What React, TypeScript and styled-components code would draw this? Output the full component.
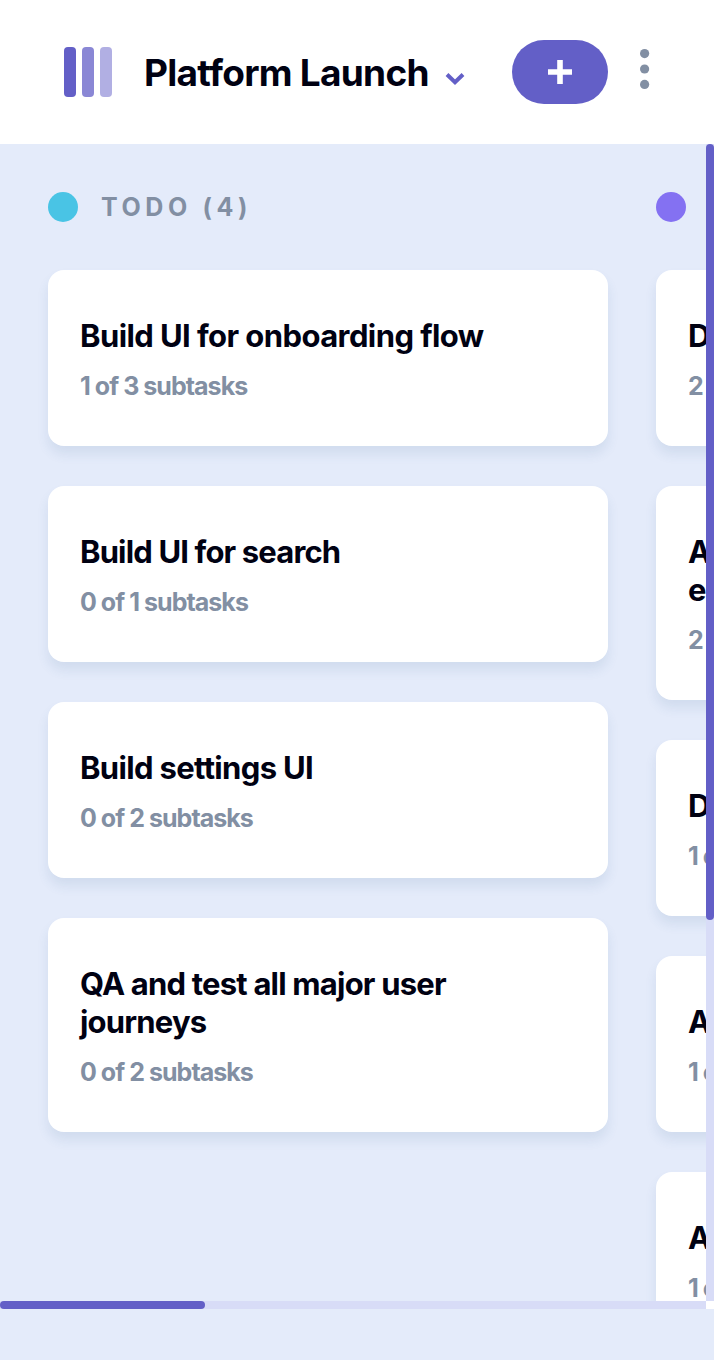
import React from "react";
import styled, { createGlobalStyle } from "styled-components";

const GlobalStyle = createGlobalStyle`
  *, *::before, *::after { box-sizing: border-box; }
  body {
    margin: 0;
    background: #e4ebfa;
    font-family: Inter, "Liberation Sans", sans-serif;
    font-weight: 700;
    overflow: hidden;
  }
  h1, h2, h3, p { margin: 0; }
`;

const Page = styled.div`
  display: flex;
  flex-direction: column;
  height: 1360px;
  background: #e4ebfa;
`;

const Header = styled.header`
  display: flex;
  align-items: center;
  flex: none;
  height: 144px;
  padding: 0 64px;
  background: #fff;
`;

const Logo = styled.div`
  display: flex;
  gap: 6px;
  margin-right: 32px;
`;

const LogoBar = styled.span<{ $opacity: number }>`
  width: 12px;
  height: 50px;
  border-radius: 4px;
  background: #635fc7;
  opacity: ${(p) => p.$opacity};
`;

const BoardSwitch = styled.div`
  display: flex;
  align-items: center;
  flex: 1;
  gap: 16px;
`;

const BoardName = styled.h1`
  width: 285px;
  padding-top: 1px;
  font-size: 37px;
  font-weight: 700;
  line-height: 46px;
  letter-spacing: -0.72px;
  color: #000112;
  white-space: nowrap;
`;

const Chevron = styled.svg`
  display: block;
  margin-top: 14px;
`;

const AddButton = styled.button`
  display: flex;
  align-items: center;
  justify-content: center;
  width: 96px;
  height: 64px;
  padding: 0;
  border: 0;
  border-radius: 32px;
  background: #635fc7;
`;

const MenuButton = styled.button`
  display: flex;
  margin: 0 0 6px 32px;
  padding: 0;
  border: 0;
  background: none;
`;

const Viewport = styled.main`
  display: grid;
  grid-template-columns: 706px 8px;
  grid-template-rows: 1157px 8px;
  flex: none;
`;

const Board = styled.div`
  display: flex;
  gap: 48px;
  padding: 48px 0 0 48px;
  overflow: hidden;
`;

const Column = styled.section`
  display: flex;
  flex-direction: column;
  flex: none;
  width: 560px;
`;

const ColumnHeader = styled.div`
  display: flex;
  align-items: center;
  gap: 23px;
  height: 30px;
  margin-bottom: 48px;
`;

const Dot = styled.span<{ $color: string }>`
  width: 30px;
  height: 30px;
  border-radius: 50%;
  background: ${(p) => p.$color};
`;

const ColumnName = styled.h2`
  font-size: 25px;
  font-weight: 700;
  line-height: 30px;
  letter-spacing: 4.6px;
  color: #828fa3;
`;

const CardList = styled.div`
  display: flex;
  flex-direction: column;
  gap: 40px;
`;

const Card = styled.article`
  flex: none;
  padding: 47px 32px 45px;
  border-radius: 16px;
  background: #fff;
  box-shadow: 0 8px 12px rgba(54, 98, 150, 0.11);
`;

const CardTitle = styled.h3<{ $tracking: number }>`
  font-size: 31px;
  font-weight: 700;
  line-height: 38px;
  letter-spacing: ${(p) => p.$tracking}px;
  color: #000112;
`;

const CardMeta = styled.p`
  margin-top: 16px;
  font-size: 25px;
  font-weight: 700;
  line-height: 30px;
  letter-spacing: -0.96px;
  color: #828fa3;
`;

const Track = styled.div`
  background: #d8dcf7;
`;

const Thumb = styled.div<{ $width: number; $height: number }>`
  width: ${(p) => p.$width}px;
  height: ${(p) => p.$height}px;
  border-radius: 4px;
  background: #635fc7;
`;

const Corner = styled.div`
  background: #fff;
`;

interface Task {
  title: string;
  done: number;
  total: number;
  tracking?: number;
}

interface ColumnData {
  name: string;
  color: string;
  tasks: Task[];
}

const columns: ColumnData[] = [
  {
    name: "TODO",
    color: "#49c4e5",
    tasks: [
      { title: "Build UI for onboarding flow", done: 1, total: 3, tracking: -0.58 },
      { title: "Build UI for search", done: 0, total: 1, tracking: -0.85 },
      { title: "Build settings UI", done: 0, total: 2, tracking: -0.66 },
      { title: "QA and test all major user journeys", done: 0, total: 2 },
    ],
  },
  {
    name: "DOING",
    color: "#8471f2",
    tasks: [
      { title: "Design settings page", done: 2, total: 3 },
      { title: "Add account management endpoints", done: 2, total: 3 },
      { title: "Design onboarding flow", done: 1, total: 3 },
      { title: "Add search endpoints", done: 1, total: 2 },
      { title: "Add auth endpoints", done: 1, total: 3 },
    ],
  },
];

export default function App() {
  return (
    <>
      <GlobalStyle />
      <Page>
        <Header>
          <Logo>
            <LogoBar $opacity={1} />
            <LogoBar $opacity={0.75} />
            <LogoBar $opacity={0.5} />
          </Logo>
          <BoardSwitch>
            <BoardName>Platform Launch</BoardName>
            <Chevron width="20" height="14" viewBox="0 0 20 14" fill="none">
              <path d="M2 2.5 10 10.2 18 2.5" stroke="#635fc7" strokeWidth="4" />
            </Chevron>
          </BoardSwitch>
          <AddButton aria-label="Add task">
            <svg width="24" height="24" viewBox="0 0 24 24">
              <path d="M9.2 0h5.6v9.3H24v5.4h-9.2V24H9.2v-9.3H0V9.3h9.2z" fill="#fff" />
            </svg>
          </AddButton>
          <MenuButton aria-label="Board menu">
            <svg width="10" height="40" viewBox="0 0 10 40" fill="#828fa3">
              <circle cx="4.6" cy="4.6" r="4.6" />
              <circle cx="4.6" cy="20" r="4.6" />
              <circle cx="4.6" cy="35.4" r="4.6" />
            </svg>
          </MenuButton>
        </Header>
        <Viewport>
          <Board>
            {columns.map((column) => (
              <Column key={column.name}>
                <ColumnHeader>
                  <Dot $color={column.color} />
                  <ColumnName>
                    {column.name} ({column.tasks.length})
                  </ColumnName>
                </ColumnHeader>
                <CardList>
                  {column.tasks.map((task) => (
                    <Card key={task.title}>
                      <CardTitle $tracking={task.tracking ?? -0.8}>{task.title}</CardTitle>
                      <CardMeta>
                        {task.done} of {task.total} subtasks
                      </CardMeta>
                    </Card>
                  ))}
                </CardList>
              </Column>
            ))}
          </Board>
          <Track>
            <Thumb $width={8} $height={776} />
          </Track>
          <Track>
            <Thumb $width={205} $height={8} />
          </Track>
          <Corner />
        </Viewport>
      </Page>
    </>
  );
}
